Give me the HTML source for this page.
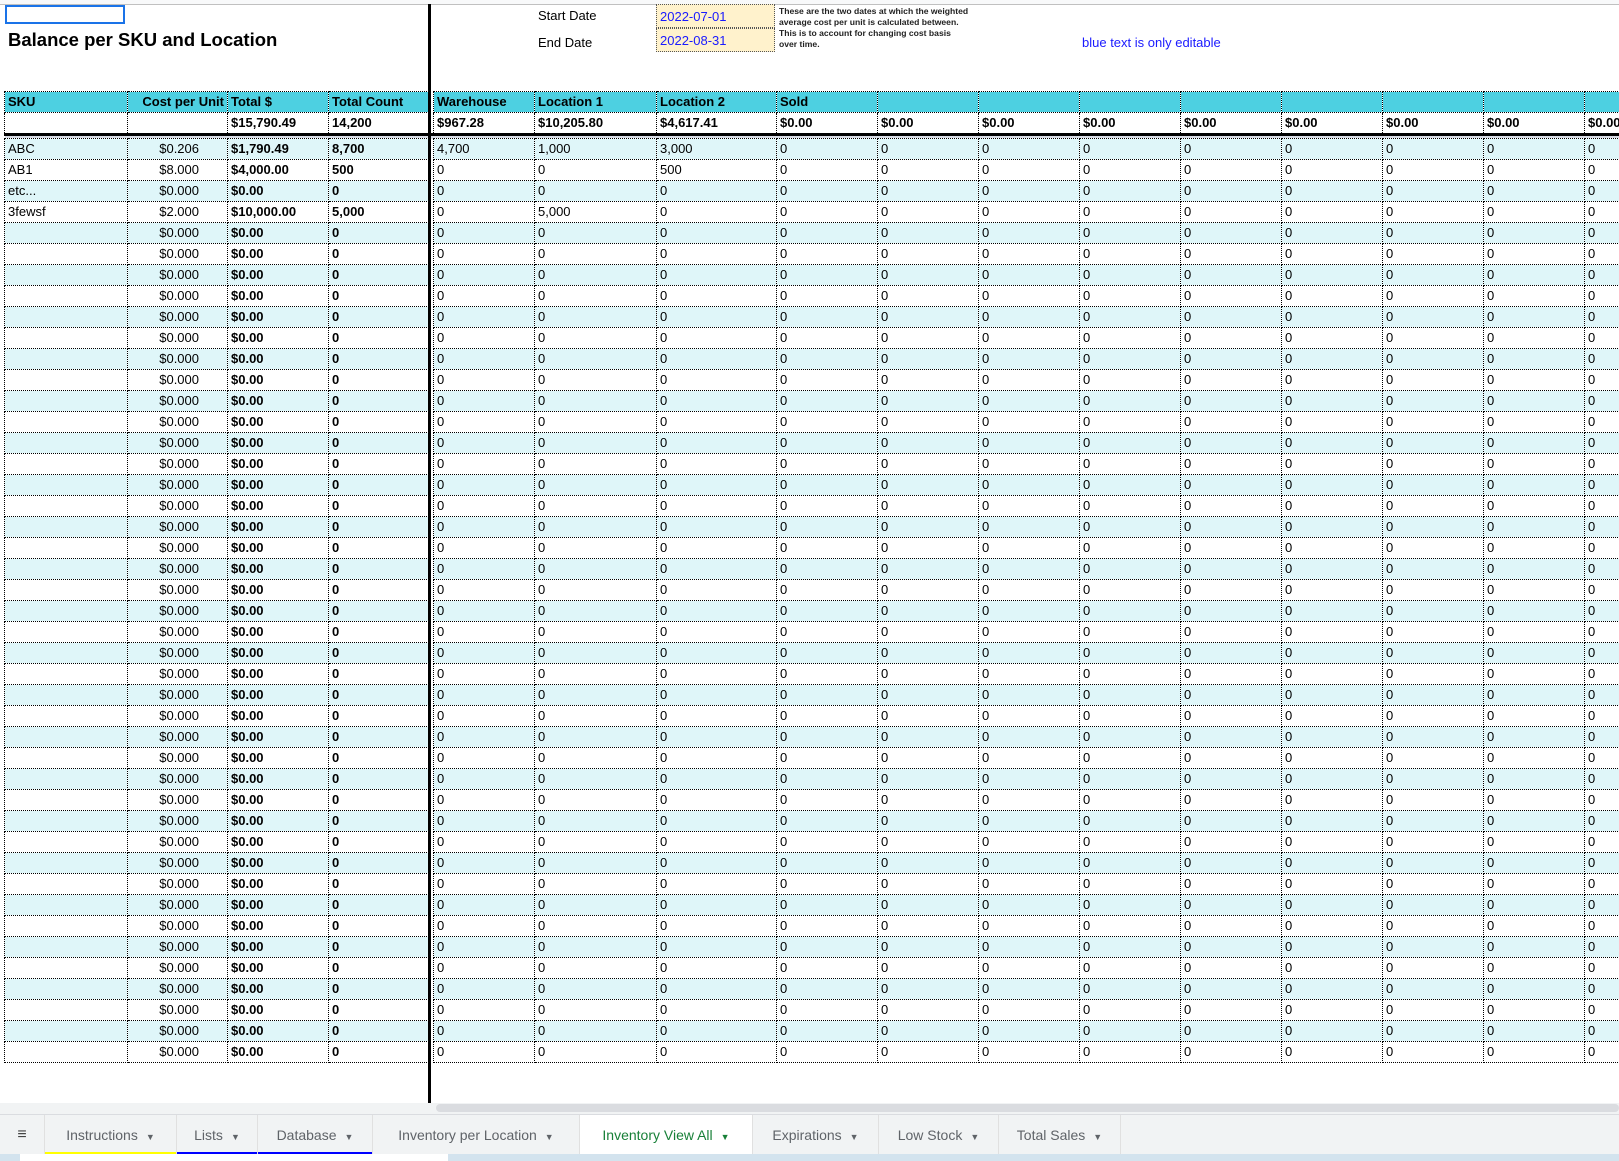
<!DOCTYPE html>
<html><head><meta charset="utf-8"><style>
body{margin:0;width:1619px;height:1161px;overflow:hidden;background:#fff;font-family:"Liberation Sans",Arial,sans-serif;position:relative}
.colhdr{position:absolute;left:0;top:0;width:1619px;height:4px;background:#f8f9fa;border-bottom:1px solid #c0c0c0}
.sel{position:absolute;left:5px;top:5px;width:120px;height:19px;border:2px solid #1a73e8;box-sizing:border-box}
.title{position:absolute;left:8px;top:29px;font-size:18.5px;font-weight:bold;color:#000}
.lbl{position:absolute;font-size:13px;color:#000}
.date{position:absolute;left:656px;width:119px;height:24px;background:#fff2cc;color:#1a1aff;font-size:13px;line-height:24px;padding-left:3px;box-sizing:border-box;border:1px dotted #555}
.note{position:absolute;left:779px;top:6px;width:190px;font-size:8.6px;line-height:11px;font-weight:bold;color:#222}
.blue{position:absolute;left:1082px;top:35px;font-size:13px;color:#1a1aff}
.vline{position:absolute;left:428px;top:4px;width:3px;height:1099px;background:#000}
.wrap{position:absolute;left:4px;top:91px;width:1615px;height:1012px;overflow:hidden}
table{border-collapse:collapse;table-layout:fixed;font-size:13px;width:1681px}
td{height:20px;padding:0 3px;border:1px dotted #000;white-space:nowrap;overflow:hidden;line-height:20px;color:#000}
tr.h td{background:#4dd0e1;font-weight:bold;height:19px}
tr.t td{font-weight:bold;height:20px}
tr.sep td{height:2px;padding:0;border:none;background:#d9dde6;border-top:3px solid #000}
tr.c td{background:#dff6f9}
td.r{text-align:right;padding-right:28px}
td.b{font-weight:bold}
td.g{border:none;background:#fff!important;padding:0}
.scroll{position:absolute;left:0;top:1103px;width:1619px;height:11px;background:#f1f3f4}
.thumb{position:absolute;left:436px;top:1104px;width:1183px;height:8px;background:#dadce0;border-radius:4px}
.tabs{position:absolute;left:0;top:1114px;width:1619px;height:40px;background:#f1f3f4;border-top:1px solid #dadce0}
.tab{position:absolute;top:0;height:40px;line-height:40px;font-size:14px;color:#5f6368;text-align:center;border-right:1px solid #e0e0e0;box-sizing:border-box}
.tab span{font-size:9px;margin-left:8px}
.tab.act{background:#fff;color:#188038}
.ul{position:absolute;bottom:0;left:0;right:0;height:3px}
.bot{position:absolute;left:0;top:1154px;width:1619px;height:7px;background:#d3e3ee}
.bot div{position:absolute;left:20px;top:0;width:428px;height:7px;background:#fff}
</style></head><body>
<div class="colhdr"></div>
<div class="sel"></div>
<div class="title">Balance per SKU and Location</div>
<div class="lbl" style="left:538px;top:8px">Start Date</div>
<div class="lbl" style="left:538px;top:35px">End Date</div>
<div class="date" style="top:4px">2022-07-01</div>
<div class="date" style="top:28px">2022-08-31</div>
<div class="note">These are the two dates at which the weighted average cost per unit is calculated between. This is to account for changing cost basis over time.</div>
<div class="blue">blue text is only editable</div>
<div class="wrap"><table>
<colgroup><col style="width:123px"><col style="width:100px"><col style="width:101px"><col style="width:100px"><col style="width:5px"><col style="width:101px"><col style="width:122px"><col style="width:120px"><col style="width:101px"><col style="width:101px"><col style="width:101px"><col style="width:101px"><col style="width:101px"><col style="width:101px"><col style="width:101px"><col style="width:101px"><col style="width:101px"></colgroup>
<tr class="h"><td>SKU</td><td style="text-align:right">Cost per Unit</td><td>Total $</td><td>Total Count</td><td class="g"></td><td>Warehouse</td><td>Location 1</td><td>Location 2</td><td>Sold</td><td></td><td></td><td></td><td></td><td></td><td></td><td></td><td></td></tr>
<tr class="t"><td></td><td></td><td>$15,790.49</td><td>14,200</td><td class="g"></td><td>$967.28</td><td>$10,205.80</td><td>$4,617.41</td><td>$0.00</td><td>$0.00</td><td>$0.00</td><td>$0.00</td><td>$0.00</td><td>$0.00</td><td>$0.00</td><td>$0.00</td><td>$0.00</td></tr>
<tr class="sep"><td></td><td></td><td></td><td></td><td></td><td></td><td></td><td></td><td></td><td></td><td></td><td></td><td></td><td></td><td></td><td></td><td></td></tr>
<tr class="c"><td>ABC</td><td class="r">$0.206</td><td class="b">$1,790.49</td><td class="b">8,700</td><td class="g"></td><td>4,700</td><td>1,000</td><td>3,000</td><td>0</td><td>0</td><td>0</td><td>0</td><td>0</td><td>0</td><td>0</td><td>0</td><td>0</td></tr>
<tr><td>AB1</td><td class="r">$8.000</td><td class="b">$4,000.00</td><td class="b">500</td><td class="g"></td><td>0</td><td>0</td><td>500</td><td>0</td><td>0</td><td>0</td><td>0</td><td>0</td><td>0</td><td>0</td><td>0</td><td>0</td></tr>
<tr class="c"><td>etc...</td><td class="r">$0.000</td><td class="b">$0.00</td><td class="b">0</td><td class="g"></td><td>0</td><td>0</td><td>0</td><td>0</td><td>0</td><td>0</td><td>0</td><td>0</td><td>0</td><td>0</td><td>0</td><td>0</td></tr>
<tr><td>3fewsf</td><td class="r">$2.000</td><td class="b">$10,000.00</td><td class="b">5,000</td><td class="g"></td><td>0</td><td>5,000</td><td>0</td><td>0</td><td>0</td><td>0</td><td>0</td><td>0</td><td>0</td><td>0</td><td>0</td><td>0</td></tr>
<tr class="c"><td></td><td class="r">$0.000</td><td class="b">$0.00</td><td class="b">0</td><td class="g"></td><td>0</td><td>0</td><td>0</td><td>0</td><td>0</td><td>0</td><td>0</td><td>0</td><td>0</td><td>0</td><td>0</td><td>0</td></tr>
<tr><td></td><td class="r">$0.000</td><td class="b">$0.00</td><td class="b">0</td><td class="g"></td><td>0</td><td>0</td><td>0</td><td>0</td><td>0</td><td>0</td><td>0</td><td>0</td><td>0</td><td>0</td><td>0</td><td>0</td></tr>
<tr class="c"><td></td><td class="r">$0.000</td><td class="b">$0.00</td><td class="b">0</td><td class="g"></td><td>0</td><td>0</td><td>0</td><td>0</td><td>0</td><td>0</td><td>0</td><td>0</td><td>0</td><td>0</td><td>0</td><td>0</td></tr>
<tr><td></td><td class="r">$0.000</td><td class="b">$0.00</td><td class="b">0</td><td class="g"></td><td>0</td><td>0</td><td>0</td><td>0</td><td>0</td><td>0</td><td>0</td><td>0</td><td>0</td><td>0</td><td>0</td><td>0</td></tr>
<tr class="c"><td></td><td class="r">$0.000</td><td class="b">$0.00</td><td class="b">0</td><td class="g"></td><td>0</td><td>0</td><td>0</td><td>0</td><td>0</td><td>0</td><td>0</td><td>0</td><td>0</td><td>0</td><td>0</td><td>0</td></tr>
<tr><td></td><td class="r">$0.000</td><td class="b">$0.00</td><td class="b">0</td><td class="g"></td><td>0</td><td>0</td><td>0</td><td>0</td><td>0</td><td>0</td><td>0</td><td>0</td><td>0</td><td>0</td><td>0</td><td>0</td></tr>
<tr class="c"><td></td><td class="r">$0.000</td><td class="b">$0.00</td><td class="b">0</td><td class="g"></td><td>0</td><td>0</td><td>0</td><td>0</td><td>0</td><td>0</td><td>0</td><td>0</td><td>0</td><td>0</td><td>0</td><td>0</td></tr>
<tr><td></td><td class="r">$0.000</td><td class="b">$0.00</td><td class="b">0</td><td class="g"></td><td>0</td><td>0</td><td>0</td><td>0</td><td>0</td><td>0</td><td>0</td><td>0</td><td>0</td><td>0</td><td>0</td><td>0</td></tr>
<tr class="c"><td></td><td class="r">$0.000</td><td class="b">$0.00</td><td class="b">0</td><td class="g"></td><td>0</td><td>0</td><td>0</td><td>0</td><td>0</td><td>0</td><td>0</td><td>0</td><td>0</td><td>0</td><td>0</td><td>0</td></tr>
<tr><td></td><td class="r">$0.000</td><td class="b">$0.00</td><td class="b">0</td><td class="g"></td><td>0</td><td>0</td><td>0</td><td>0</td><td>0</td><td>0</td><td>0</td><td>0</td><td>0</td><td>0</td><td>0</td><td>0</td></tr>
<tr class="c"><td></td><td class="r">$0.000</td><td class="b">$0.00</td><td class="b">0</td><td class="g"></td><td>0</td><td>0</td><td>0</td><td>0</td><td>0</td><td>0</td><td>0</td><td>0</td><td>0</td><td>0</td><td>0</td><td>0</td></tr>
<tr><td></td><td class="r">$0.000</td><td class="b">$0.00</td><td class="b">0</td><td class="g"></td><td>0</td><td>0</td><td>0</td><td>0</td><td>0</td><td>0</td><td>0</td><td>0</td><td>0</td><td>0</td><td>0</td><td>0</td></tr>
<tr class="c"><td></td><td class="r">$0.000</td><td class="b">$0.00</td><td class="b">0</td><td class="g"></td><td>0</td><td>0</td><td>0</td><td>0</td><td>0</td><td>0</td><td>0</td><td>0</td><td>0</td><td>0</td><td>0</td><td>0</td></tr>
<tr><td></td><td class="r">$0.000</td><td class="b">$0.00</td><td class="b">0</td><td class="g"></td><td>0</td><td>0</td><td>0</td><td>0</td><td>0</td><td>0</td><td>0</td><td>0</td><td>0</td><td>0</td><td>0</td><td>0</td></tr>
<tr class="c"><td></td><td class="r">$0.000</td><td class="b">$0.00</td><td class="b">0</td><td class="g"></td><td>0</td><td>0</td><td>0</td><td>0</td><td>0</td><td>0</td><td>0</td><td>0</td><td>0</td><td>0</td><td>0</td><td>0</td></tr>
<tr><td></td><td class="r">$0.000</td><td class="b">$0.00</td><td class="b">0</td><td class="g"></td><td>0</td><td>0</td><td>0</td><td>0</td><td>0</td><td>0</td><td>0</td><td>0</td><td>0</td><td>0</td><td>0</td><td>0</td></tr>
<tr class="c"><td></td><td class="r">$0.000</td><td class="b">$0.00</td><td class="b">0</td><td class="g"></td><td>0</td><td>0</td><td>0</td><td>0</td><td>0</td><td>0</td><td>0</td><td>0</td><td>0</td><td>0</td><td>0</td><td>0</td></tr>
<tr><td></td><td class="r">$0.000</td><td class="b">$0.00</td><td class="b">0</td><td class="g"></td><td>0</td><td>0</td><td>0</td><td>0</td><td>0</td><td>0</td><td>0</td><td>0</td><td>0</td><td>0</td><td>0</td><td>0</td></tr>
<tr class="c"><td></td><td class="r">$0.000</td><td class="b">$0.00</td><td class="b">0</td><td class="g"></td><td>0</td><td>0</td><td>0</td><td>0</td><td>0</td><td>0</td><td>0</td><td>0</td><td>0</td><td>0</td><td>0</td><td>0</td></tr>
<tr><td></td><td class="r">$0.000</td><td class="b">$0.00</td><td class="b">0</td><td class="g"></td><td>0</td><td>0</td><td>0</td><td>0</td><td>0</td><td>0</td><td>0</td><td>0</td><td>0</td><td>0</td><td>0</td><td>0</td></tr>
<tr class="c"><td></td><td class="r">$0.000</td><td class="b">$0.00</td><td class="b">0</td><td class="g"></td><td>0</td><td>0</td><td>0</td><td>0</td><td>0</td><td>0</td><td>0</td><td>0</td><td>0</td><td>0</td><td>0</td><td>0</td></tr>
<tr><td></td><td class="r">$0.000</td><td class="b">$0.00</td><td class="b">0</td><td class="g"></td><td>0</td><td>0</td><td>0</td><td>0</td><td>0</td><td>0</td><td>0</td><td>0</td><td>0</td><td>0</td><td>0</td><td>0</td></tr>
<tr class="c"><td></td><td class="r">$0.000</td><td class="b">$0.00</td><td class="b">0</td><td class="g"></td><td>0</td><td>0</td><td>0</td><td>0</td><td>0</td><td>0</td><td>0</td><td>0</td><td>0</td><td>0</td><td>0</td><td>0</td></tr>
<tr><td></td><td class="r">$0.000</td><td class="b">$0.00</td><td class="b">0</td><td class="g"></td><td>0</td><td>0</td><td>0</td><td>0</td><td>0</td><td>0</td><td>0</td><td>0</td><td>0</td><td>0</td><td>0</td><td>0</td></tr>
<tr class="c"><td></td><td class="r">$0.000</td><td class="b">$0.00</td><td class="b">0</td><td class="g"></td><td>0</td><td>0</td><td>0</td><td>0</td><td>0</td><td>0</td><td>0</td><td>0</td><td>0</td><td>0</td><td>0</td><td>0</td></tr>
<tr><td></td><td class="r">$0.000</td><td class="b">$0.00</td><td class="b">0</td><td class="g"></td><td>0</td><td>0</td><td>0</td><td>0</td><td>0</td><td>0</td><td>0</td><td>0</td><td>0</td><td>0</td><td>0</td><td>0</td></tr>
<tr class="c"><td></td><td class="r">$0.000</td><td class="b">$0.00</td><td class="b">0</td><td class="g"></td><td>0</td><td>0</td><td>0</td><td>0</td><td>0</td><td>0</td><td>0</td><td>0</td><td>0</td><td>0</td><td>0</td><td>0</td></tr>
<tr><td></td><td class="r">$0.000</td><td class="b">$0.00</td><td class="b">0</td><td class="g"></td><td>0</td><td>0</td><td>0</td><td>0</td><td>0</td><td>0</td><td>0</td><td>0</td><td>0</td><td>0</td><td>0</td><td>0</td></tr>
<tr class="c"><td></td><td class="r">$0.000</td><td class="b">$0.00</td><td class="b">0</td><td class="g"></td><td>0</td><td>0</td><td>0</td><td>0</td><td>0</td><td>0</td><td>0</td><td>0</td><td>0</td><td>0</td><td>0</td><td>0</td></tr>
<tr><td></td><td class="r">$0.000</td><td class="b">$0.00</td><td class="b">0</td><td class="g"></td><td>0</td><td>0</td><td>0</td><td>0</td><td>0</td><td>0</td><td>0</td><td>0</td><td>0</td><td>0</td><td>0</td><td>0</td></tr>
<tr class="c"><td></td><td class="r">$0.000</td><td class="b">$0.00</td><td class="b">0</td><td class="g"></td><td>0</td><td>0</td><td>0</td><td>0</td><td>0</td><td>0</td><td>0</td><td>0</td><td>0</td><td>0</td><td>0</td><td>0</td></tr>
<tr><td></td><td class="r">$0.000</td><td class="b">$0.00</td><td class="b">0</td><td class="g"></td><td>0</td><td>0</td><td>0</td><td>0</td><td>0</td><td>0</td><td>0</td><td>0</td><td>0</td><td>0</td><td>0</td><td>0</td></tr>
<tr class="c"><td></td><td class="r">$0.000</td><td class="b">$0.00</td><td class="b">0</td><td class="g"></td><td>0</td><td>0</td><td>0</td><td>0</td><td>0</td><td>0</td><td>0</td><td>0</td><td>0</td><td>0</td><td>0</td><td>0</td></tr>
<tr><td></td><td class="r">$0.000</td><td class="b">$0.00</td><td class="b">0</td><td class="g"></td><td>0</td><td>0</td><td>0</td><td>0</td><td>0</td><td>0</td><td>0</td><td>0</td><td>0</td><td>0</td><td>0</td><td>0</td></tr>
<tr class="c"><td></td><td class="r">$0.000</td><td class="b">$0.00</td><td class="b">0</td><td class="g"></td><td>0</td><td>0</td><td>0</td><td>0</td><td>0</td><td>0</td><td>0</td><td>0</td><td>0</td><td>0</td><td>0</td><td>0</td></tr>
<tr><td></td><td class="r">$0.000</td><td class="b">$0.00</td><td class="b">0</td><td class="g"></td><td>0</td><td>0</td><td>0</td><td>0</td><td>0</td><td>0</td><td>0</td><td>0</td><td>0</td><td>0</td><td>0</td><td>0</td></tr>
<tr class="c"><td></td><td class="r">$0.000</td><td class="b">$0.00</td><td class="b">0</td><td class="g"></td><td>0</td><td>0</td><td>0</td><td>0</td><td>0</td><td>0</td><td>0</td><td>0</td><td>0</td><td>0</td><td>0</td><td>0</td></tr>
<tr><td></td><td class="r">$0.000</td><td class="b">$0.00</td><td class="b">0</td><td class="g"></td><td>0</td><td>0</td><td>0</td><td>0</td><td>0</td><td>0</td><td>0</td><td>0</td><td>0</td><td>0</td><td>0</td><td>0</td></tr>
<tr class="c"><td></td><td class="r">$0.000</td><td class="b">$0.00</td><td class="b">0</td><td class="g"></td><td>0</td><td>0</td><td>0</td><td>0</td><td>0</td><td>0</td><td>0</td><td>0</td><td>0</td><td>0</td><td>0</td><td>0</td></tr>
<tr><td></td><td class="r">$0.000</td><td class="b">$0.00</td><td class="b">0</td><td class="g"></td><td>0</td><td>0</td><td>0</td><td>0</td><td>0</td><td>0</td><td>0</td><td>0</td><td>0</td><td>0</td><td>0</td><td>0</td></tr>
</table></div>
<div class="vline"></div>
<div class="scroll"></div><div class="thumb"></div>
<div class="tabs">
<div class="tab" style="left:0;width:45px;font-size:16px;color:#444">&#8801;</div>
<div class="tab" style="left:45px;width:132px">Instructions<span>&#9660;</span><div class="ul" style="background:#ffff00"></div></div>
<div class="tab" style="left:177px;width:81px">Lists<span>&#9660;</span><div class="ul" style="background:#0000ff"></div></div>
<div class="tab" style="left:258px;width:115px">Database<span>&#9660;</span><div class="ul" style="background:#0000ff"></div></div>
<div class="tab" style="left:373px;width:207px">Inventory per Location<span>&#9660;</span></div>
<div class="tab act" style="left:580px;width:173px">Inventory View All<span>&#9660;</span></div>
<div class="tab" style="left:753px;width:126px">Expirations<span>&#9660;</span></div>
<div class="tab" style="left:879px;width:120px">Low Stock<span>&#9660;</span></div>
<div class="tab" style="left:999px;width:122px">Total Sales<span>&#9660;</span></div>
</div>
<div class="bot"><div></div></div>
</body></html>
